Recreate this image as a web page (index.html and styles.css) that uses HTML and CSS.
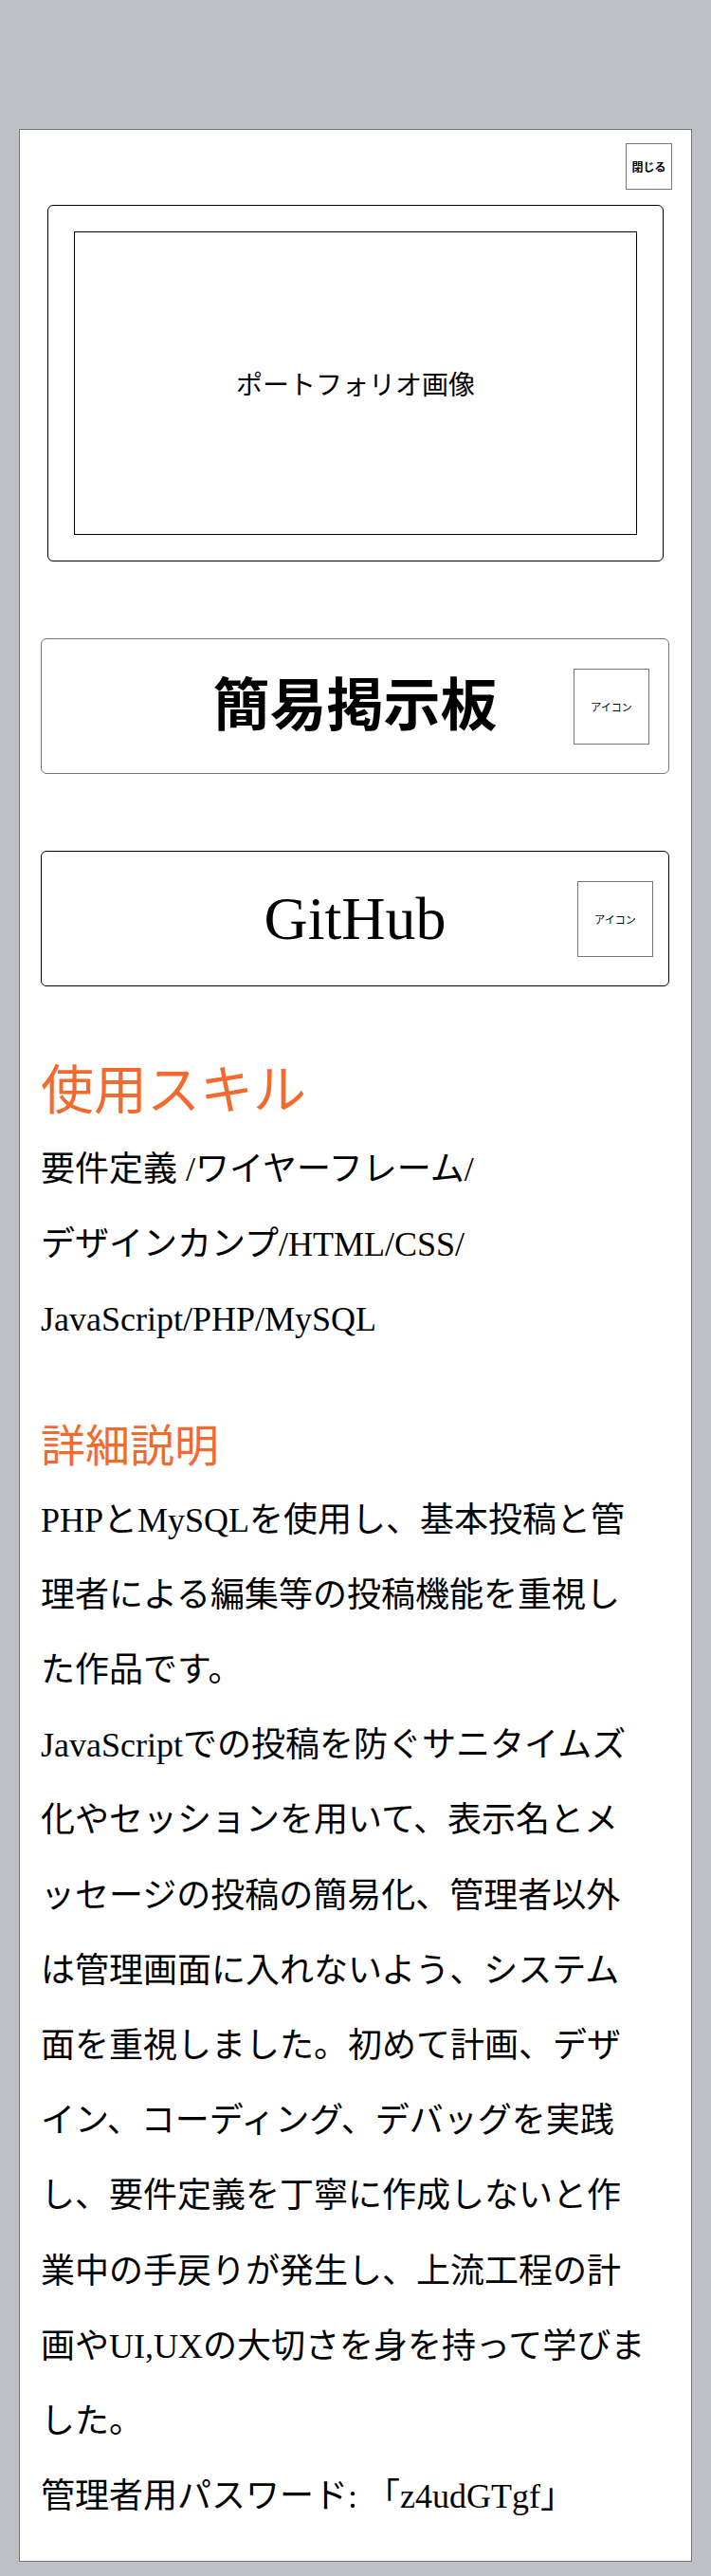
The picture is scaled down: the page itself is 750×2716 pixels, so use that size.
FILE: index.html
```html
<!DOCTYPE html>
<html lang="ja">
<head>
<meta charset="utf-8">
<title>ポートフォリオ詳細</title>
<link rel="stylesheet" href="styles.css">
</head>
<body>
<div class="modal">
  <div class="modal-head">
    <button class="close-btn" type="button">閉じる</button>
  </div>
  <div class="shot">
    <div class="shot-img">ポートフォリオ画像</div>
  </div>
  <a class="link-card link-card--gray" href="#">
    <span class="link-title link-title--bold">簡易掲示板</span>
    <span class="icon-box">アイコン</span>
  </a>
  <a class="link-card link-card--dark" href="#">
    <span class="link-title">GitHub</span>
    <span class="icon-box">アイコン</span>
  </a>
  <h2 class="sec-title sec-title--lg">使用スキル</h2>
  <p class="skills">要件定義 /ワイヤーフレーム/<br>デザインカンプ/HTML/CSS/<br>JavaScript/PHP/MySQL</p>
  <h2 class="sec-title sec-title--md">詳細説明</h2>
  <p class="desc">PHPとMySQLを使用し、基本投稿と管理者による編集等の投稿機能を重視した作品です。<br>JavaScriptでの投稿を防ぐサニタイムズ化やセッションを用いて、表示名とメッセージの投稿の簡易化、管理者以外は管理画面に入れないよう、システム面を重視しました。初めて計画、デザイン、コーディング、デバッグを実践し、要件定義を丁寧に作成しないと作業中の手戻りが発生し、上流工程の計画やUI,UXの大切さを身を持って学びました。<br>管理者用パスワード: 「z4udGTgf」</p>
</div>
</body>
</html>
```

FILE: styles.css
```css
* {
  box-sizing: border-box;
}

html, body {
  margin: 0;
}

body {
  background: #bfc0c5;
  padding: 136px 0 16px;
  font-family: "Liberation Serif", "Noto Sans CJK JP", serif;
  color: #000;
}

.modal {
  margin: 0 20px;
  background: #fff;
  border: 1px solid #777;
  padding: 14px 23px 28px 22px;
}

.modal-head {
  display: flex;
  justify-content: flex-end;
  margin-right: -3px;
}

.close-btn {
  width: 49px;
  height: 49px;
  padding: 0;
  border: 1px solid #777;
  background: #fff;
  font-family: "Noto Sans CJK JP", sans-serif;
  font-weight: 700;
  font-size: 12px;
  color: #000;
  display: flex;
  align-items: center;
  justify-content: center;
}

.shot {
  margin: 16px 6px 0 7px;
  border: 1px solid #000;
  border-radius: 6px;
  padding: 27px;
}

.shot-img {
  height: 320px;
  border: 1px solid #000;
  display: flex;
  align-items: center;
  justify-content: center;
  font-size: 28px;
}

.link-card {
  margin-top: 81px;
  height: 143px;
  border: 1px solid #777;
  border-radius: 6px;
  display: grid;
  grid-template-columns: 1fr auto 1fr;
  align-items: center;
  padding: 0 20px;
  color: #000;
  text-decoration: none;
}

.link-card--dark {
  border-color: #000;
  padding: 0 16px;
}

.link-title {
  grid-column: 2;
  font-size: 64px;
  line-height: 1;
}

.link-title--bold {
  font-size: 60px;
  font-weight: 700;
}

.icon-box {
  grid-column: 3;
  justify-self: end;
  width: 80px;
  height: 80px;
  border: 1px solid #777;
  display: flex;
  align-items: center;
  justify-content: center;
  font-size: 11px;
}

.sec-title {
  margin: 0;
  font-weight: 400;
  color: #f26a2e;
}

.sec-title--lg {
  margin-top: 77px;
  font-size: 56px;
  line-height: 67px;
}

.sec-title--md {
  margin-top: 65px;
  font-size: 47px;
  line-height: 56px;
}

.skills {
  margin: 10px 0 0;
  font-size: 36px;
  line-height: 79.2px;
}

.desc {
  margin: 11px 0 0;
  width: 643px;
  font-size: 36px;
  line-height: 79.2px;
}
```
